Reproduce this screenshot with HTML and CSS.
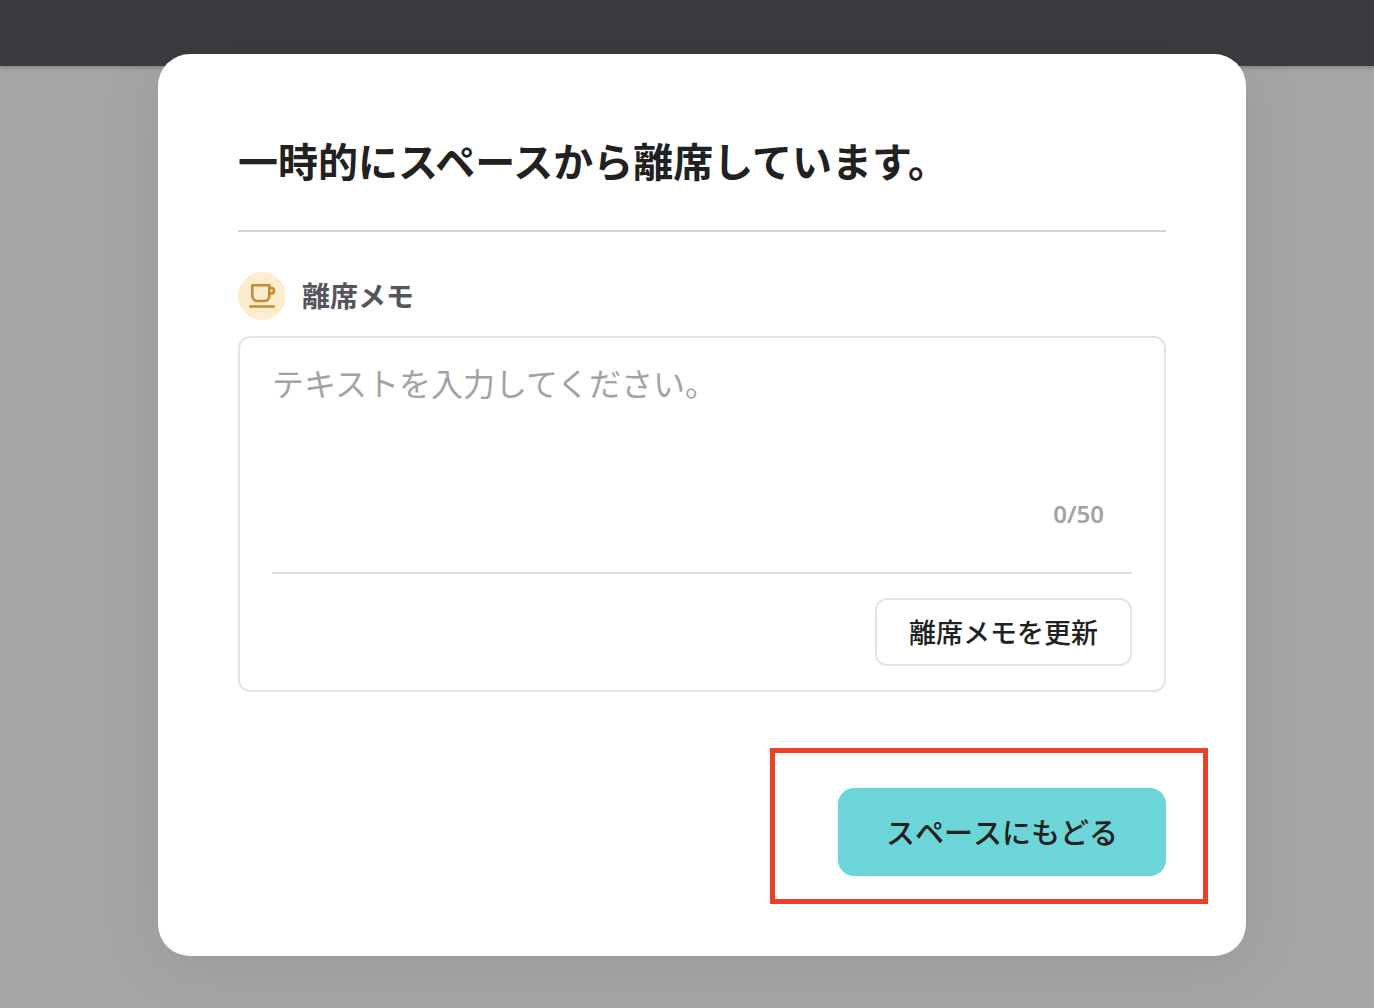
FILE: index.html
```html
<!DOCTYPE html>
<html lang="ja">

<head>
	<meta charset="utf-8">
	<meta name="viewport" content="width=device-width, initial-scale=1">
	<title>離席中</title>
	<link rel="stylesheet" href="styles.css">
</head>

<body>
	<header class="topbar"></header>
	<main class="overlay">
		<section class="modal" role="dialog" aria-labelledby="modal-title">
			<h1 class="modal-title" id="modal-title">一時的にスペースから離席しています。</h1>
			<form class="memo-form">
				<div class="memo-head">
					<span class="memo-icon">
						<svg width="48" height="48" viewBox="0 0 48 48" fill="none" stroke="#c58c2e" stroke-width="2.600" stroke-linecap="round" stroke-linejoin="round" aria-hidden="true">
							<path d="M14.300 13.300H31.300V24A5 5 0 0 1 26.300 29H19.300A5 5 0 0 1 14.300 24Z" />
							<path d="M31.300 16H33.200A2.800 2.800 0 0 1 33.200 21.600H31.300" />
							<path d="M12.300 34.500H35.700" />
						</svg>
					</span>
					<label class="memo-label" for="memo">離席メモ</label>
				</div>
				<div class="memo-box">
					<textarea class="memo-input" id="memo" maxlength="50" placeholder="テキストを入力してください。"></textarea>
					<div class="memo-count">0/50</div>
					<div class="memo-actions">
						<button type="button" class="btn-update">離席メモを更新</button>
					</div>
				</div>
			</form>
			<div class="modal-footer">
				<div class="highlight">
					<button type="button" class="btn-return">スペースにもどる</button>
				</div>
			</div>
		</section>
	</main>
</body>

</html>
```

FILE: styles.css
```css
* {
	box-sizing: border-box;
}

body {
	margin: 0;
	min-height: 100vh;
	background: #a5a5a5;
	color: #212121;
	font-family: "Noto Sans", "Noto Sans CJK JP", sans-serif;
}

button,
textarea {
	font-family: inherit;
	color: inherit;
}

.topbar {
	height: 66px;
	background: #3b3c40;
	box-shadow: 0 2px 4px rgba(0, 0, 0, 0.2);
}

.overlay {
	margin-top: -12px;
	padding: 0 128px 52px 158px;
}

.modal {
	position: relative;
	padding: 80px;
	background: #fff;
	border-radius: 32px;
	box-shadow: 0 8px 64px rgba(0, 0, 0, 0.08);
}

.modal-title {
	margin: 0 0 40px;
	padding-bottom: 40px;
	border-bottom: 2px solid #d3d4dc;
	font-size: 40px;
	font-weight: 700;
	line-height: 56px;
}

.memo-head {
	display: flex;
	align-items: center;
	gap: 16px;
	margin-bottom: 16px;
}

.memo-icon {
	display: flex;
	width: 48px;
	height: 48px;
	border-radius: 50%;
	background: #fcedcf;
}

.memo-label {
	color: #54565b;
	font-size: 28px;
	font-weight: 700;
	line-height: 48px;
}

.memo-box {
	padding: 24px 32px;
	border: 2px solid #e6e1e8;
	border-radius: 12px;
}

.memo-input {
	display: block;
	width: 100%;
	height: 128px;
	padding: 0;
	border: 0;
	outline: 0;
	resize: none;
	background: transparent;
	font-size: 32px;
	line-height: 44px;
}

.memo-input::placeholder {
	color: #a3a3a3;
	opacity: 1;
}

.memo-count {
	padding: 8px 28px 42px 0;
	border-bottom: 2px solid #dedede;
	color: #a3a3a3;
	font-size: 24px;
	font-weight: 600;
	line-height: 32px;
	text-align: right;
}

.memo-actions {
	display: flex;
	justify-content: flex-end;
	padding-top: 24px;
}

.btn-update {
	height: 68px;
	padding: 0 32px 2px;
	border: 2px solid #e6e1e8;
	border-radius: 12px;
	background: #fff;
	font-size: 27px;
	font-weight: 500;
	cursor: pointer;
}

.modal-footer {
	display: flex;
	justify-content: flex-end;
	margin-top: 96px;
}

.highlight {
	position: relative;
}

.highlight::after {
	content: "";
	position: absolute;
	inset: -40px -42px -28px -68px;
	border: 5px solid #ec4126;
	pointer-events: none;
}

.btn-return {
	display: block;
	height: 88px;
	padding: 0 48px 2px;
	border: 0;
	border-radius: 16px;
	background: #6cd5d8;
	font-size: 29px;
	font-weight: 500;
	font-kerning: none;
	cursor: pointer;
}
```
